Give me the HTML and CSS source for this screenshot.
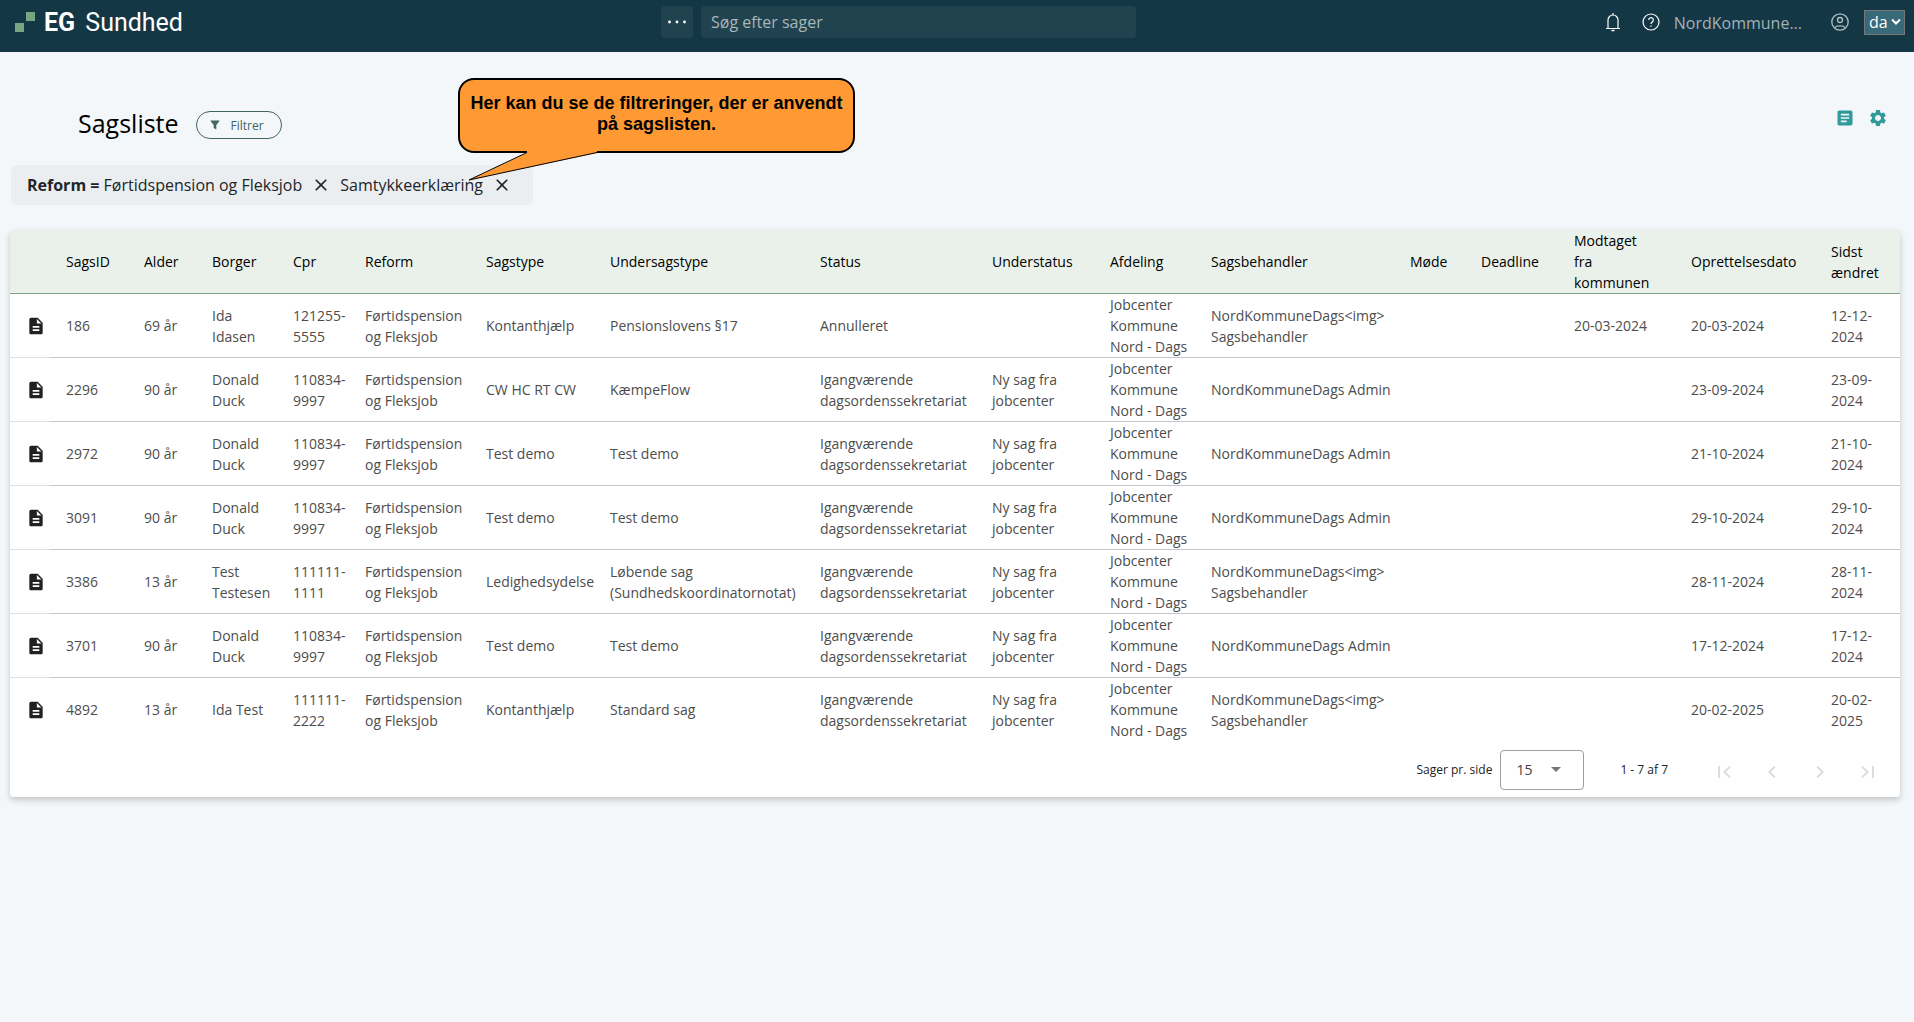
FILE: index.html
```html
<!DOCTYPE html>
<html lang="da">
<head>
<meta charset="utf-8">
<meta name="viewport" content="width=device-width, initial-scale=1">
<title>EG Sundhed – Sagsliste</title>
<link rel="stylesheet" href="styles.css">
</head>
<body>
<svg class="sprite" aria-hidden="true">
  <symbol id="doc" viewBox="0 0 24 24"><path fill="currentColor" d="M14 2H6c-1.100 0-2 .9-2 2v16c0 1.100.9 2 2 2h12c1.100 0 2-.9 2-2V8l-6-6zm2 16H8v-2h8v2zm0-4H8v-2h8v2zm-3-5V3.500L18.500 9H13z"/></symbol>
  <symbol id="cross" viewBox="0 0 24 24"><path fill="currentColor" d="M19 6.410 17.590 5 12 10.590 6.410 5 5 6.410 10.590 12 5 17.590 6.410 19 12 13.410 17.590 19 19 17.590 13.410 12z"/></symbol>
</svg>

<header class="topbar">
  <a class="brand" href="#">
    <svg class="brand-mark" width="20" height="20" viewBox="0 0 20 20" aria-hidden="true"><path fill="#77a582" d="M11 0h9v9h-9zM0 11h9v9H0z"/></svg>
    <span class="brand-name"><b>EG</b> Sundhed</span>
  </a>
  <div class="search">
    <button class="more" type="button" aria-label="Flere"><svg width="20" height="20" viewBox="0 0 20 20"><g fill="#fff"><circle cx="2.500" cy="10" r="1.400"/><circle cx="10" cy="10" r="1.400"/><circle cx="17.500" cy="10" r="1.400"/></g></svg></button>
    <input class="search-field" type="search" placeholder="Søg efter sager" aria-label="Søg efter sager">
  </div>
  <div class="account">
    <button class="bare bell" type="button" aria-label="Notifikationer"><svg width="16" height="20" viewBox="0 0 16 20" fill="none" stroke="#fff" stroke-width="1.200"><path d="M1 16.500h14M3 16.500V8a5 5 0 0 1 10 0v8.500M8 3V1"/><path d="M6.500 18.500h3" stroke-width="1.500"/></svg></button>
    <button class="bare" type="button" aria-label="Hjælp"><svg width="18" height="18" viewBox="0 0 18 18" fill="none" stroke="#fff" stroke-width="1.200"><circle cx="9" cy="9" r="8"/><path d="M6.700 7a2.300 2.300 0 1 1 3.500 2c-.8.500-1.200.9-1.200 2"/><path d="M9 12.500v1.300"/></svg></button>
    <span class="org">NordKommune...</span>
    <button class="bare profile" type="button" aria-label="Profil"><svg width="18" height="18" viewBox="0 0 18 18" fill="none" stroke="#b3c0c5" stroke-width="1.300"><circle cx="9" cy="9" r="8.200"/><circle cx="9" cy="7" r="2.500"/><path d="M4 14.500c1-2.300 9-2.300 10 0"/></svg></button>
    <div class="lang">
      <select aria-label="Sprog"><option>da</option></select>
      <svg width="10" height="8" viewBox="0 0 10 8" fill="none" stroke="#fff" stroke-width="2"><path d="m1 1.500 4 4 4-4"/></svg>
    </div>
  </div>
</header>

<main class="page">
  <div class="heading">
    <h1>Sagsliste</h1>
    <button class="filter" type="button"><svg width="10" height="10" viewBox="0 0 10 10" aria-hidden="true"><path fill="currentColor" d="M1 .5h8c.5 0 .6.500.3.800L6.300 5v4.500L3.700 8V5L.7 1.300C.4 1 .5.500 1 .5z"/></svg>Filtrer</button>
    <div class="tools">
      <button class="bare" type="button" aria-label="Rapport"><svg width="20" height="20" viewBox="0 0 24 24"><path fill="currentColor" d="M19 3H5c-1.100 0-2 .9-2 2v14c0 1.100.9 2 2 2h14c1.100 0 2-.9 2-2V5c0-1.100-.9-2-2-2zm-5 14H7v-2h7v2zm3-4H7v-2h10v2zm0-4H7V7h10v2z"/></svg></button>
      <button class="bare" type="button" aria-label="Indstillinger"><svg width="20" height="20" viewBox="0 0 24 24"><path fill="currentColor" d="M19.140 12.940c.04-.3.060-.61.060-.94 0-.32-.02-.64-.07-.94l2.030-1.580c.18-.14.230-.41.120-.61l-1.920-3.320c-.12-.22-.37-.29-.59-.22l-2.390.960c-.5-.38-1.030-.7-1.620-.94l-.36-2.540c-.04-.24-.24-.41-.48-.41h-3.840c-.24 0-.43.170-.47.410l-.36 2.540c-.59.240-1.130.570-1.620.940l-2.390-.96c-.22-.08-.47 0-.59.220L2.740 8.870c-.12.210-.08.470.120.610l2.030 1.580c-.05.300-.09.630-.09.940s.02.640.070.940l-2.030 1.580c-.18.140-.23.410-.12.610l1.920 3.320c.12.220.37.290.59.220l2.390-.96c.5.380 1.030.700 1.620.940l.36 2.540c.05.240.24.410.48.410h3.840c.24 0 .44-.17.470-.41l.36-2.540c.59-.24 1.130-.56 1.620-.94l2.390.960c.22.080.47 0 .59-.22l1.920-3.320c.12-.22.070-.47-.12-.61l-2.010-1.580zM12 15.600c-1.980 0-3.600-1.620-3.600-3.600s1.620-3.600 3.600-3.600 3.600 1.620 3.600 3.600-1.620 3.600-3.600 3.600z"/></svg></button>
    </div>
  </div>

  <div class="applied">
    <span><b>Reform =</b> Førtidspension og Fleksjob</span>
    <button class="bare" type="button" aria-label="Fjern Reform"><svg width="20" height="20"><use href="#cross"/></svg></button>
    <span>Samtykkeerklæring</span>
    <button class="bare" type="button" aria-label="Fjern Samtykkeerklæring"><svg width="20" height="20"><use href="#cross"/></svg></button>
    <div class="callout">
      <p>Her kan du se de filtreringer, der er anvendt på sagslisten.</p>
      <svg class="callout-tail" width="132" height="32" viewBox="0 0 132 32" aria-hidden="true"><path fill="#ff9933" d="M60 0v3L2 30 130 3V0z"/><path fill="none" stroke="#000" d="M60 2.500 2 30 130 2.500"/></svg>
    </div>
  </div>

  <section class="card">
    <table>
      <colgroup><col class="w-icon"><col class="w-id"><col class="w-age"><col class="w-name"><col class="w-cpr"><col class="w-reform"><col class="w-type"><col class="w-sub"><col class="w-status"><col class="w-substatus"><col class="w-dept"><col class="w-worker"><col class="w-meeting"><col class="w-deadline"><col class="w-received"><col class="w-created"><col class="w-changed"></colgroup>
      <thead>
        <tr><th></th><th>SagsID</th><th>Alder</th><th>Borger</th><th>Cpr</th><th>Reform</th><th>Sagstype</th><th>Undersagstype</th><th>Status</th><th>Understatus</th><th>Afdeling</th><th>Sagsbehandler</th><th>Møde</th><th>Deadline</th><th>Modtaget fra kommunen</th><th>Oprettelsesdato</th><th>Sidst ændret</th></tr>
      </thead>
      <tbody>
        <tr><td><svg width="20" height="20"><use href="#doc"/></svg></td><td>186</td><td>69 år</td><td>Ida Idasen</td><td>121255-5555</td><td>Førtidspension og Fleksjob</td><td>Kontanthjælp</td><td>Pensionslovens §17</td><td>Annulleret</td><td></td><td>Jobcenter Kommune Nord - Dags</td><td>NordKommuneDags&lt;img&gt; Sagsbehandler</td><td></td><td></td><td>20-03-2024</td><td>20-03-2024</td><td>12-12-2024</td></tr>
        <tr><td><svg width="20" height="20"><use href="#doc"/></svg></td><td>2296</td><td>90 år</td><td>Donald Duck</td><td>110834-9997</td><td>Førtidspension og Fleksjob</td><td>CW HC RT CW</td><td>KæmpeFlow</td><td>Igangværende dagsordenssekretariat</td><td>Ny sag fra jobcenter</td><td>Jobcenter Kommune Nord - Dags</td><td>NordKommuneDags Admin</td><td></td><td></td><td></td><td>23-09-2024</td><td>23-09-2024</td></tr>
        <tr><td><svg width="20" height="20"><use href="#doc"/></svg></td><td>2972</td><td>90 år</td><td>Donald Duck</td><td>110834-9997</td><td>Førtidspension og Fleksjob</td><td>Test demo</td><td>Test demo</td><td>Igangværende dagsordenssekretariat</td><td>Ny sag fra jobcenter</td><td>Jobcenter Kommune Nord - Dags</td><td>NordKommuneDags Admin</td><td></td><td></td><td></td><td>21-10-2024</td><td>21-10-2024</td></tr>
        <tr><td><svg width="20" height="20"><use href="#doc"/></svg></td><td>3091</td><td>90 år</td><td>Donald Duck</td><td>110834-9997</td><td>Førtidspension og Fleksjob</td><td>Test demo</td><td>Test demo</td><td>Igangværende dagsordenssekretariat</td><td>Ny sag fra jobcenter</td><td>Jobcenter Kommune Nord - Dags</td><td>NordKommuneDags Admin</td><td></td><td></td><td></td><td>29-10-2024</td><td>29-10-2024</td></tr>
        <tr><td><svg width="20" height="20"><use href="#doc"/></svg></td><td>3386</td><td>13 år</td><td>Test Testesen</td><td>111111-1111</td><td>Førtidspension og Fleksjob</td><td>Ledighedsydelse</td><td>Løbende sag (Sundhedskoordinatornotat)</td><td>Igangværende dagsordenssekretariat</td><td>Ny sag fra jobcenter</td><td>Jobcenter Kommune Nord - Dags</td><td>NordKommuneDags&lt;img&gt; Sagsbehandler</td><td></td><td></td><td></td><td>28-11-2024</td><td>28-11-2024</td></tr>
        <tr><td><svg width="20" height="20"><use href="#doc"/></svg></td><td>3701</td><td>90 år</td><td>Donald Duck</td><td>110834-9997</td><td>Førtidspension og Fleksjob</td><td>Test demo</td><td>Test demo</td><td>Igangværende dagsordenssekretariat</td><td>Ny sag fra jobcenter</td><td>Jobcenter Kommune Nord - Dags</td><td>NordKommuneDags Admin</td><td></td><td></td><td></td><td>17-12-2024</td><td>17-12-2024</td></tr>
        <tr><td><svg width="20" height="20"><use href="#doc"/></svg></td><td>4892</td><td>13 år</td><td>Ida Test</td><td>111111-2222</td><td>Førtidspension og Fleksjob</td><td>Kontanthjælp</td><td>Standard sag</td><td>Igangværende dagsordenssekretariat</td><td>Ny sag fra jobcenter</td><td>Jobcenter Kommune Nord - Dags</td><td>NordKommuneDags&lt;img&gt; Sagsbehandler</td><td></td><td></td><td></td><td>20-02-2025</td><td>20-02-2025</td></tr>
      </tbody>
    </table>
    <div class="pager">
      <label for="page-size">Sager pr. side</label>
      <div class="page-size">
        <select id="page-size"><option>15</option></select>
        <svg width="10" height="5" viewBox="0 0 10 5" aria-hidden="true"><path fill="#757575" d="M0 0h10L5 5z"/></svg>
      </div>
      <span class="range">1 - 7 af 7</span>
      <div class="steps">
        <button type="button" disabled aria-label="Første side"><svg width="24" height="24" viewBox="0 0 24 24"><path fill="currentColor" d="M18.410 16.590 13.820 12l4.590-4.590L17 6l-6 6 6 6zM6 6h2v12H6z"/></svg></button>
        <button type="button" disabled aria-label="Forrige side"><svg width="24" height="24" viewBox="0 0 24 24"><path fill="currentColor" d="M15.410 7.410 14 6l-6 6 6 6 1.410-1.410L10.830 12z"/></svg></button>
        <button type="button" disabled aria-label="Næste side"><svg width="24" height="24" viewBox="0 0 24 24"><path fill="currentColor" d="M10 6 8.590 7.410 13.170 12l-4.580 4.590L10 18l6-6z"/></svg></button>
        <button type="button" disabled aria-label="Sidste side"><svg width="24" height="24" viewBox="0 0 24 24"><path fill="currentColor" d="M5.590 7.410 10.180 12l-4.590 4.590L7 18l6-6-6-6zM16 6h2v12h-2z"/></svg></button>
      </div>
    </div>
  </section>
</main>
</body>
</html>
```
FILE: styles.css
```css
* { box-sizing: border-box; }

body {
  margin: 0;
  min-height: 100vh;
  background: #f3f7fa;
  color: #212529;
  font: 14px/21px "Open Sans", "Noto Sans", sans-serif;
}

button, input, select { font: inherit; }
svg { display: block; }
.sprite { display: none; }

.bare {
  padding: 0;
  border: 0;
  background: none;
  color: inherit;
}

/* Top bar */
.topbar {
  display: grid;
  grid-template-columns: minmax(0, 661fr) 475fr 778fr;
  height: 52px;
  padding-top: 6px;
  background: #143746;
  align-items: start;
}

.brand {
  display: flex;
  align-items: center;
  gap: 9px;
  height: 32px;
  padding-left: 15px;
  color: #fff;
  font-family: Roboto, "Open Sans", sans-serif;
  font-size: 25px;
  text-decoration: none;
}
.brand-name b { font-weight: 700; margin-right: 4px; }

.search { display: flex; gap: 8px; }
.more {
  display: grid;
  place-items: center;
  width: 32px;
  height: 32px;
  padding: 0;
  border: 0;
  border-radius: 4px;
  background: #20434f;
}
.search-field {
  flex: 1;
  min-width: 0;
  height: 32px;
  padding: 0 10px;
  border: 0;
  border-radius: 4px;
  background: #20434f;
  color: #fff;
  font-size: 16px;
}
.search-field::placeholder { color: #a9b6bb; opacity: 1; }

.account {
  display: flex;
  align-items: center;
  justify-content: flex-end;
  height: 32px;
  padding-right: 9px;
}
.bell { margin-right: 21px; }
.org {
  margin: 0 29px 0 14px;
  padding-top: 2px;
  color: #a3b1b7;
  font-size: 16px;
}
.profile { margin-right: 15px; }

.lang, .page-size { display: grid; align-items: center; }
.lang > *, .page-size > * { grid-area: 1 / 1; }
.lang svg, .page-size svg { justify-self: end; pointer-events: none; }
.lang svg { margin-right: 4px; }
.lang select {
  appearance: none;
  width: 41px;
  height: 25px;
  padding: 0 4px;
  border: 1px solid #767676;
  border-radius: 0;
  background: #386a79;
  color: #fff;
  font-size: 16px;
  line-height: 22px;
}

/* Heading */
.page { padding: 53px 14px 24px 10px; }
.heading {
  display: flex;
  align-items: center;
  height: 40px;
  padding: 0 12px 0 68px;
}
.heading h1 {
  margin: 0 17px 0 0;
  padding-bottom: 4px;
  color: #000;
  font-size: 25px;
  font-weight: 500;
  line-height: 32px;
}
.filter {
  display: flex;
  align-items: center;
  gap: 11px;
  height: 28px;
  padding: 0 17px 0 13px;
  border: 1px solid #41655f;
  border-radius: 14px;
  background: transparent;
  color: #41655f;
  font-size: 12px;
}
.tools {
  display: flex;
  gap: 13px;
  align-self: flex-start;
  margin-left: auto;
  padding-top: 3px;
  color: #319a9b;
}

/* Applied filters */
.applied {
  position: relative;
  display: flex;
  align-items: center;
  width: fit-content;
  height: 40px;
  margin: 20px 0 25px 1px;
  padding: 0 21px 0 16px;
  border-radius: 5px;
  background: #ebeef0;
  font-size: 16px;
  gap: 9px;
}

.callout {
  position: absolute;
  z-index: 1;
  left: 447px;
  bottom: 52px;
  width: 397px;
  height: 75px;
  padding: 13px 0;
  border: 2px solid #000;
  border-radius: 16px;
  background: #ff9933;
  color: #000;
  font: bold 18px/21px "Liberation Sans", Arial, sans-serif;
  text-align: center;
}
.callout p { margin: 0; }
.callout-tail {
  position: absolute;
  left: 7px;
  top: 70px;
}

/* Case table */
.card {
  background: #fff;
  border-radius: 4px;
  box-shadow: 0 3px 6px rgba(0, 0, 0, .2);
}
table {
  width: 100%;
  table-layout: fixed;
  border-collapse: separate;
  border-spacing: 0;
}
.w-icon { width: 40px; }
.w-id { width: 78px; }
.w-age { width: 68px; }
.w-name { width: 81px; }
.w-cpr { width: 72px; }
.w-reform { width: 121px; }
.w-type { width: 124px; }
.w-sub { width: 210px; }
.w-status { width: 172px; }
.w-substatus { width: 118px; }
.w-dept { width: 101px; }
.w-worker { width: 199px; }
.w-meeting { width: 71px; }
.w-deadline { width: 93px; }
.w-received { width: 117px; }
.w-created { width: 140px; }
.w-changed { width: 85px; }

th, td {
  height: 64px;
  padding: 0 0 0 16px;
  text-align: left;
  vertical-align: middle;
}
th {
  padding-right: 20px;
  border-bottom: 1px solid #7da584;
  background: #eaf1ea;
  color: #000;
  font-weight: 400;
}
td {
  border-bottom: 1px solid #c4c7c7;
  color: #4d4d4d;
}
td:first-child {
  border-bottom-color: #e0e0e0;
  color: #212121;
}
tbody tr:last-child td { border-bottom-color: transparent; }

/* Pager */
.pager {
  display: flex;
  align-items: center;
  justify-content: flex-end;
  height: 55px;
  padding-right: 8px;
  color: #212121;
  font-size: 12px;
}
.page-size { margin: 0 36px 0 8px; }
.page-size select {
  appearance: none;
  width: 84px;
  height: 40px;
  padding: 0 15px;
  border: 1px solid #9e9e9e;
  border-radius: 4px;
  background: #fff;
  color: #424242;
  font-size: 14px;
}
.page-size svg { margin-right: 23px; }
.range { margin-right: 32px; }
.steps { display: flex; padding-top: 5px; }
.steps button {
  display: grid;
  place-items: center;
  width: 48px;
  height: 48px;
  padding: 0;
  border: 0;
  background: none;
  color: #dcdcdc;
}
```
